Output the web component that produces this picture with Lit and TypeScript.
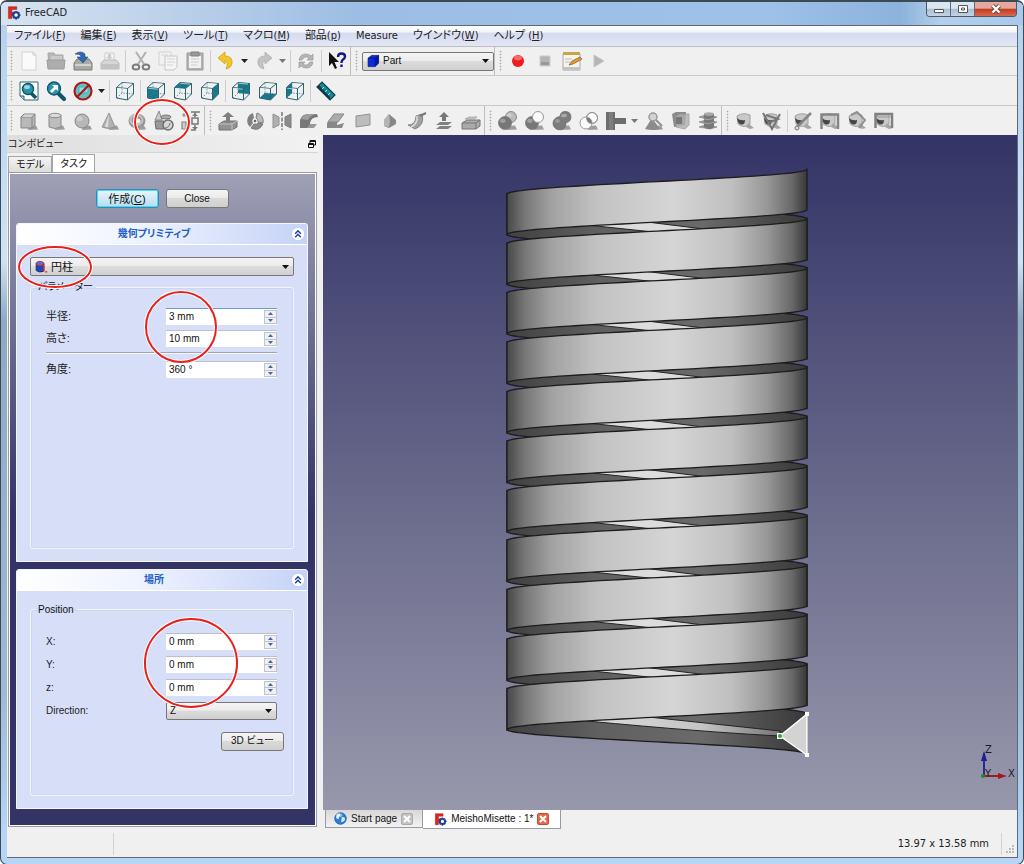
import { LitElement, html, svg, css, nothing, SVGTemplateResult, TemplateResult } from "lit";
import { customElement, property } from "lit/decorators.js";

/* ---------- icon drawings, all on a 20 x 20 grid ---------- */

const TEAL = "#16788c";

const viewCube = (face: string): SVGTemplateResult => svg`
  ${face ? svg`<path d=${face} fill=${TEAL} />` : nothing}
  <path d="M1.5 6.5 L12.5 7.5 V19 L1.5 17 Z M1.5 6.5 L7 1.5 L18.5 2.5 L12.5 7.5 M18.5 2.5 V13 L12.5 19" fill="none" stroke="#2b6470" />
  <path d="M7 2 V12 L18 13 M7 12 L2 17" fill="none" stroke="#44808c" stroke-width=".8" stroke-dasharray="1.5 1.3" />
  <path d="M2.2 7.3 L11.8 8.2 M7.4 2.3 L17 3.1" stroke="#fff" stroke-width=".6" />`;

const ball = (cx: number, cy: number, r: number, fill: string) => svg`
  <circle cx=${cx} cy=${cy} r=${r} fill=${fill} stroke="#777" stroke-width=".8" />
  <ellipse cx=${cx - r / 3} cy=${cy - r / 3} rx=${r / 2.4} ry=${r / 3} fill="#fff" opacity=".3" />`;

const shade = svg`<path d="M9 19 L19 18.5 L17 14.5 L10 15 Z" fill="#888" opacity=".8" />`;

const drum = svg`
  <path d="M2 5 Q8 1 15 4 V13 Q10 18 3 13 Z" fill="#c9c9c9" stroke="#a0a0a0" />
  <path d="M2 7 Q5 10 10 9 Q10 14 6 13.500 Q3 13 2 7 Z" fill="#454545" />
  <path d="M13 12 L19 17 L15 18 L11 16 Z" fill="#a6a6a6" />`;

const ICONS: Record<string, SVGTemplateResult> = {
  logo: svg`
    <path d="M2 1 H14 V5 H7 V9 H12 V12 H7 V18 H2 Z" fill="#e02420" stroke="#8f1512" stroke-width=".6" />
    <circle cx="13" cy="13" r="4" fill="#fff" stroke="#1c3f96" stroke-width="3" />
    <path d="M13 7 V9 M13 17 V19.5 M7 13 H9 M17 13 H19.5 M8.8 8.8 L10 10 M16 16 L17.4 17.4 M17.4 8.8 L16 10 M8.8 17.4 L10 16" stroke="#1c3f96" stroke-width="2" />`,
  file: svg`<path d="M3 1 H14 L17 4 V19 H3 Z" fill="#fafafa" stroke="#d2d2d2" /><path d="M14 1 V4 H17" fill="#e4e4e4" stroke="#ccc" />`,
  open: svg`<path d="M2 2 H8 L9 4 H17 V16 H3 Z" fill="#b8b8b8" stroke="#a5a5a5" /><path d="M5 6 H16 M5 8 H16" stroke="#ddd" /><path d="M1 9 H19 L18 18 H2 Z" fill="#adadad" stroke="#9c9c9c" />`,
  save: svg`<path d="M1 12 L4 8 H16 L19 12 V19 H1 Z" fill="#aaa9a6" stroke="#7b7b78" /><path d="M2 13 H18 V15 H2 Z" fill="#d2d2d0" /><path d="M2 3 Q8 -1 12 3 V6 H15 L10 12 L4 6 H8 Q8 3 2 3 Z" fill="#3269ad" stroke="#234f85" stroke-width=".6" />`,
  print: svg`<path d="M5 2 H14 V10 H5 Z" fill="#f4f4f4" stroke="#ccc" /><path d="M8 6 V3 H11 V6 H13 L9.500 9 L6 6 Z" fill="#ccc" /><path d="M1 12 L4 9 H16 L19 12 V18 H1 Z" fill="#d6d6d6" stroke="#bababa" /><path d="M1 13 H19 V18 H1 Z" fill="#c2c2c2" />`,
  cut: svg`<path d="M5 1 L13 13 M15 1 L7 13" stroke="#b0b0b0" stroke-width="2" /><ellipse cx="5" cy="16" rx="3.3" ry="2.6" fill="none" stroke="#7d7d7d" stroke-width="2" /><ellipse cx="15" cy="16" rx="3.3" ry="2.6" fill="none" stroke="#7d7d7d" stroke-width="2" />`,
  copy: svg`<path d="M1 1 H13 V14 H1 Z" fill="#f2f2f2" stroke="#d2d2d2" /><path d="M7 5 H19 V16 L16 19 H7 Z" fill="#f4f4f4" stroke="#c6c6c6" /><path d="M9 8 H17 M9 11 H17 M9 14 H15 M3 4 H10" stroke="#d4d4d4" />`,
  paste: svg`<path d="M2 2 H18 V19 H2 Z" fill="#b2b2b2" stroke="#9a9a9a" /><path d="M4 5 H16 V17 H4 Z" fill="#f1f1f1" /><path d="M6 1 H14 V5 H6 Z" fill="#999" stroke="#808080" /><path d="M6 8 H14 M6 11 H14 M6 14 H12" stroke="#ccc" />`,
  undo: svg`<path d="M2 7 L9 1 V5 Q17 5 16 13 Q15 17 10 18 Q13 10 9 10 V13 Z" fill="#f2c52b" stroke="#cda21d" stroke-width=".8" />`,
  redo: svg`<path d="M18 7 L11 1 V5 Q3 5 4 13 Q5 17 10 18 Q7 10 11 10 V13 Z" fill="#c2c2c2" stroke="#b0b0b0" stroke-width=".8" />`,
  refresh: svg`<path d="M3 9 Q4 3 10 3 Q13 3 15 5 L17 3 V9 H11 L13 7 Q9 4 6 9 Z M17 11 Q16 17 10 17 Q7 17 5 15 L3 17 V11 H9 L7 13 Q11 16 14 11 Z" fill="#b5b5b5" stroke="#999" stroke-width=".7" />`,
  whats: svg`<path d="M2 1 V15 L5 12 L8 18 L10 17 L7.500 11 H12 Z" fill="#111" /><path d="M11 6 Q11 2.500 14.500 2.500 Q18 2.500 18 5.500 Q18 7.500 15.500 9 Q14.500 10 14.500 12 M14.500 13.500 V16" fill="none" stroke="#17178c" stroke-width="2.4" />`,
  part: svg`<path d="M3 6 L8 2 H18 V13 L13 18 H3 Z" fill="#0a2be0" stroke="#061266" /><path d="M3 6 H13 L18 2 M13 6 V18" fill="none" stroke="#061266" /><path d="M13 6 L18 2 V13 L13 18 Z" fill="#0519a0" />`,
  rec: svg`<circle cx="10" cy="10" r="6" fill="#ee1c1c" /><ellipse cx="10" cy="7" rx="4" ry="2.400" fill="#fff" opacity=".35" />`,
  stop: svg`<path d="M5 5 H15 V15 H5 Z" fill="#b4b4b4" stroke="#ccc" /><path d="M6 11 H14 V14 H6 Z" fill="#999" />`,
  macro: svg`<path d="M1 3 H18 V19 H1 Z" fill="#f3f3f0" stroke="#aaa" /><path d="M1 1 H18 V4 H1 Z" fill="#c7a64a" /><path d="M1 16 H18 V19 H1 Z" fill="#c3c3c3" /><path d="M7 14 L10 10 L18 6 L20 8 L11 13 Z" fill="#e59a35" stroke="#8a5514" stroke-width=".7" /><path d="M3 8 H10 M3 11 H8" stroke="#bbb" />`,
  play: svg`<path d="M5 4 L15 10 L5 16 Z" fill="#b5b5b5" stroke="#c8c8c8" />`,
  fit: svg`<path d="M1 1 H19 V19 H5 L1 15 Z" fill="#fff" stroke="#2b6470" /><path d="M1 15 H5 V19" fill="#bcd" stroke="#2b6470" /><path d="M12 12 L17 17" stroke="#0f5666" stroke-width="3.500" /><circle cx="9" cy="8" r="5.500" fill="#2794ab" stroke="#0f5666" stroke-width="1.400" /><ellipse cx="8" cy="6" rx="3" ry="2" fill="#9ad6e2" />`,
  fitsel: svg`<path d="M12 12 L18 18" stroke="#0f5666" stroke-width="4" stroke-linecap="round" /><circle cx="8" cy="7.500" r="6.500" fill="#2794ab" stroke="#0f5666" stroke-width="1.400" /><path d="M6 4 H12 V10 L10 8 L6 12 L4 10 L8 6 Z" fill="#fff" />`,
  draw: svg`<circle cx="10" cy="10" r="8" fill="#5ec2cb" /><path d="M6 6 H12 V12 H6 Z M12 6 L15 4 V11 L12 13" fill="#98dde0" stroke="#4fa3ae" stroke-width=".8" /><circle cx="10" cy="10" r="8.500" fill="none" stroke="#b01515" stroke-width="2.200" /><path d="M4 16 L16 4" stroke="#b01515" stroke-width="2.200" />`,
  iso: viewCube(""),
  front: viewCube("M1.500 6.500 L12.500 7.500 V19 L1.500 17 Z"),
  top: viewCube("M1.500 6.500 L7 1.500 L18.500 2.500 L12.500 7.500 Z"),
  right: viewCube("M12.500 7.500 L18.500 2.500 V13 L12.500 19 Z"),
  rear: viewCube("M7 1.500 L18.500 2.500 V13 L7 12 Z"),
  bottom: viewCube("M1.500 17 L7 12 L18.500 13 L12.500 19 Z"),
  left: viewCube("M1.500 6.500 L7 1.500 V12 L1.500 17 Z"),
  measure: svg`<path d="M1 6 L6 1 L19 14 L14 19 Z" fill="#13899c" stroke="#123f48" stroke-width="1.200" /><path d="M1 6 L14 19 V16 L3 4 Z" fill="#173a42" /><path d="M8 6 L6 8 M11 9 L9 11 M14 12 L12 14" stroke="#bff" stroke-width=".8" />`,
  box: svg`${shade}<path d="M2 6 L5 3 H16 V14 L13 17 H2 Z" fill="#b8b8b8" stroke="#858585" /><path d="M2 6 H13 V17 M13 6 L16 3" fill="none" stroke="#858585" /><path d="M3 6 L5.500 3.500 H15 L12.500 6 Z" fill="#d4d4d4" />`,
  cylinder: svg`${shade}<path d="M3 4 V16 Q9 19 15 16 V4 Z" fill="#bdbdbd" stroke="#8a8a8a" /><ellipse cx="9" cy="4.500" rx="6" ry="2.200" fill="#dcdcdc" stroke="#8a8a8a" />`,
  sphere: svg`${shade}${ball(9, 10, 7, "#b8b8b8")}`,
  cone: svg`${shade}<path d="M9 2 L2 16 Q8 19 15 16 Z" fill="#b2b2b2" stroke="#888" stroke-width=".8" /><path d="M9 3 L5 16 H8 Z" fill="#ddd" />`,
  torus: svg`${shade}<ellipse cx="10" cy="10" rx="6" ry="5" fill="none" stroke="#979797" stroke-width="5" /><ellipse cx="9.500" cy="9" rx="6" ry="5" fill="none" stroke="#c4c4c4" stroke-width="2" />`,
  prims: svg`<path d="M5 0 L1 9 H8 Z" fill="#ccc" stroke="#8c8c8c" /><ellipse cx="12" cy="6" rx="5" ry="2" fill="#aaa" stroke="#777" /><path d="M1 10 H10 V18 H2 Z" fill="#9a9a9a" stroke="#6b6b6b" /><circle cx="14" cy="14" r="5" fill="#d6d6d6" stroke="#6f6f6f" stroke-width="1.500" /><path d="M11 17 Q15 17 16 12" fill="none" stroke="#777" />`,
  builder: svg`<path d="M3 2 V6 M1 4 H5 M1 11 H5 V18 H1 Z" fill="#ccc" stroke="#888" stroke-width="1.200" /><path d="M10 1 H19 M11 7 H17 V13 H11 Z M14 1 V6 M14 14 V19 H10" fill="none" stroke="#777" stroke-width="1.500" /><path d="M11 5 L14 2 L17 5 M11 16 L14 19 L17 16" fill="#777" />`,
  extrude: svg`<path d="M1 13 L6 10 H19 V16 L14 19 H1 Z" fill="#929292" stroke="#707070" /><path d="M1 13 H14 V19 M14 13 L19 10" fill="none" stroke="#c2c2c2" /><path d="M8 12 V6 H4 L10 1 L16 6 H12 V12 Z" fill="#808080" />`,
  revolve: svg`<path d="M8 2 A8.200 8.200 0 0 0 5 16 L8 12 A3.500 3.500 0 0 1 9 7 Z" fill="#808080" /><path d="M12 2 A8.200 8.200 0 0 1 18 12 L13 11 A3.500 3.500 0 0 0 11 7 Z" fill="#bcbcbc" stroke="#808080" /><path d="M6 17 Q14 21 18 13 L13 12 Q12 14 9 13 Z" fill="#8b8b8b" stroke="#777" /><circle cx="10" cy="10" r="1.300" fill="#666" />`,
  mirror: svg`<path d="M10 1 V19" stroke="#777" stroke-width="1.500" stroke-dasharray="4 1.500" /><path d="M1 3 L7 6 V14 L1 17 Z" fill="#b0b0b0" stroke="#909090" /><path d="M19 3 L13 6 V14 L19 17 Z" fill="#8c8c8c" stroke="#7a7a7a" />`,
  fillet: svg`<path d="M1 9 Q3 3 9 3 H18 L19 6 Q12 6 11 12 V17 H1 Z" fill="#777" /><path d="M2 8 Q4 4 9 3 H18 Q11 4 9 9 Z" fill="#9e9e9e" /><path d="M11 13 H18 L15 17 H8 Z" fill="#999" />`,
  chamfer: svg`<path d="M1 12 L8 3 H18 L11 12 V17 H1 Z" fill="#888" /><path d="M2 11 L8 3 H18 L12 11 Z" fill="#acacac" stroke="#888" /><path d="M11 14 L18 12 L16 17 H9 Z" fill="#888" />`,
  faceicon: svg`<path d="M3 5 L17 3 V14 L3 16 Z" fill="#bdbdbd" stroke="#949494" />`,
  ruled: svg`<path d="M4 15 V9 L9 3 L16 9 V13 L9 17 Z" fill="#878787" /><path d="M4 9 L9 3 L10 10 L9 16 L4 15 Z" fill="#b5b5b5" />`,
  loft: svg`<path d="M1 14 Q9 14 9 5 L15 3 Q18 14 8 18 Z" fill="#a0a0a0" stroke="#858585" /><path d="M10 5 Q11 13 4 16" stroke="#ddd" fill="none" stroke-width="1.500" /><path d="M13 5 L19 2" stroke="#777" stroke-width="2" />`,
  sweep: svg`<path d="M2 14 L6 11 H18 L14 14 Z M2 18 L6 15 H18 L14 18 Z" fill="#808080" /><path d="M8 10 V6 H5 L10 1 L15 6 H12 V10 Z" fill="#777" />`,
  offset: svg`<path d="M1 12 L6 9 H19 V15 L15 18 H1 Z" fill="#aaa" stroke="#777" /><path d="M1 12 H15 V18 M15 12 L19 9" fill="none" stroke="#777" /><path d="M4 8 L8 6 H16 L13 8 Z" fill="#ccc" stroke="#999" stroke-width=".7" />`,
  bool: svg`${shade}${ball(13, 6, 5.5, "#bcbcbc")}${ball(7, 12, 6.5, "#777")}`,
  cutbool: svg`${shade}${ball(7, 12, 6.5, "#777")}<circle cx="13" cy="6" r="5.500" fill="#fbfbfb" stroke="#999" />`,
  union: svg`${shade}<path d="M8 5 A5.500 5.500 0 1 1 14 11.500 A6.500 6.500 0 1 1 6 6 Q7.500 6 8 5 Z" fill="#7c7c7c" stroke="#6c6c6c" stroke-width=".8" /><ellipse cx="12" cy="4.500" rx="3" ry="1.800" fill="#aaa" /><ellipse cx="5.500" cy="10" rx="2.500" ry="2" fill="#999" />`,
  common: svg`${shade}<circle cx="13" cy="7" r="5.500" fill="#fbfbfb" stroke="#999" /><circle cx="7" cy="12" r="6" fill="#fbfbfb" stroke="#999" /><path d="M7.500 7 Q12 6 13 12.500 Q8 13 7.500 7 Z" fill="#777" /><circle cx="13" cy="7" r="5.500" fill="none" stroke="#999" />`,
  connect: svg`<path d="M0 1 H9 V7 H20 V13 H9 V19 H0 Z" fill="#6d6d6d" /><path d="M3 1 H7 V19 H3 Z" fill="#7e7e7e" />`,
  check: svg`${shade}<path d="M8 7 L1 18 Q8 20 16 18 Z" fill="#8b8b8b" /><circle cx="9" cy="6" r="4" fill="#d2d2d2" stroke="#999" stroke-width="1.500" /><path d="M12 9 L18 15" stroke="#909090" stroke-width="2" />`,
  section: svg`<path d="M1 3 L5 1 H15 L14 14 L3 16 Z" fill="#8a8a8a" /><path d="M5 5 L9 3 H18 V14 L14 18 L5 16 Z" fill="#b0b0b0" opacity=".8" stroke="#999" /><path d="M5 6 H11 V13 H5 Z" fill="#777" />`,
  cross: svg`<path d="M1 6 L8 4 L19 6 L12 9 Z M1 11 L8 9 L19 11 L12 14 Z M1 16 L8 14 L19 16 L12 18 Z" fill="#999" stroke="#858585" stroke-width=".7" /><path d="M6 3 Q10 1 16 3 V16 Q11 20 6 16 Z" fill="#787878" /><path d="M6 8 Q11 10 16 7 M6 12 Q11 14 16 11" fill="none" stroke="#a5a5a5" /><ellipse cx="11" cy="3" rx="5" ry="1.800" fill="#a9a9a9" />`,
  mlinear: drum,
  mangular: svg`${drum}<path d="M1 2 L10 18 L18 3 M4 4 L16 8 L6 12" fill="none" stroke="#777" stroke-width="2" />`,
  mclear: svg`${drum}<path d="M3 17 L18 2" stroke="#858585" stroke-width="2.500" /><circle cx="4" cy="17" r="2" fill="#ddd" stroke="#777" />`,
  mtoggle: svg`${drum}<path d="M1.500 18 V3.500 H18 V18" fill="none" stroke="#858585" stroke-width="2.500" />`,
  m3d: svg`${drum}<path d="M4 4 L10 1 L18 9 L12 17" fill="none" stroke="#909090" stroke-width="2" />`,
  mdelta: svg`${drum}<path d="M1.500 17 V3 H18 V17" fill="none" stroke="#808080" stroke-width="2.500" /><path d="M2 6 H17" stroke="#999" />`,
  cyl: svg`<path d="M3 5 V15 Q8 19 14 16 V5 Z" fill="#1d48b5" stroke="#10245f" /><ellipse cx="8.500" cy="5" rx="5.500" ry="3" fill="#4676dc" stroke="#d22" stroke-width="1.300" /><path d="M14 5 V16 M16 17 H19" stroke="#d22" stroke-width="2" />`,
  globe: svg`<circle cx="10" cy="10" r="9" fill="#2c7fd6" stroke="#1a5299" /><path d="M5 4 Q9 1 10 5 Q6 8 8 10 Q4 12 3 8 Z M12 8 Q17 7 17 11 Q15 17 11 15 Z" fill="#d8eefc" /><ellipse cx="8" cy="5" rx="5" ry="3" fill="#fff" opacity=".45" />`,
  up: svg`<circle cx="10" cy="10" r="9.500" fill="#fff" stroke="#b5c3e8" /><path d="M6 9.500 L10 5.500 L14 9.500 M6 14.500 L10 10.500 L14 14.500" fill="none" stroke="#1b3f9e" stroke-width="2" />`,
  float: svg`<path d="M6 3 H17 V12 H6 Z M6 5 H17" fill="#eee" stroke="#111" stroke-width="2" /><path d="M3 9 H13 V17 H3 Z M3 11 H13" fill="#eee" stroke="#111" stroke-width="2" />`,
};

@customElement("fc-icon")
class FcIcon extends LitElement {
  static styles = css`
    :host { display: inline-flex; flex: none; width: 20px; height: 20px; }
    .art { display: block; width: 100%; height: 100%; }
  `;
  @property() name = "";
  render() {
    return html`<svg class="art" viewBox="0 0 20 20" aria-hidden="true">${ICONS[this.name] ?? nothing}</svg>`;
  }
}

@customElement("fc-spin")
class FcSpin extends LitElement {
  static styles = css`
    :host { display: flex; min-width: 0; height: 17px; background: #fff; border-top: 1px solid #b9c0d2; box-sizing: border-box; }
    :host([active]) { border-top-color: #6b9bd2; }
    .field { flex: 1; min-width: 0; border: 0; padding: 0 0 0 3px; background: none; color: #111; outline: 0;
      font: 10px/16px "Liberation Sans", "Noto Sans CJK JP", sans-serif; }
    .steps { display: flex; flex: none; flex-direction: column; width: 13px; padding: 1px 0; }
    .step { flex: 1; min-height: 0; display: grid; place-items: center; padding: 0; border: 1px solid #c3c3c9; background: #f0f0f2; }
    .step + .step { border-top: 0; }
    .tri { width: 5px; height: 3px; display: block; }
  `;
  @property() value = "";
  @property() label = "";
  render() {
    return html`
      <input class="field" aria-label=${this.label} .value=${this.value} />
      <span class="steps">
        <button class="step" aria-label="+"><svg class="tri" viewBox="0 0 5 3"><path d="M0 3 L2.500 0 L5 3 Z" fill="#4a62a8" /></svg></button>
        <button class="step" aria-label="-"><svg class="tri" viewBox="0 0 5 3"><path d="M0 0 L2.500 3 L5 0 Z" fill="#4a62a8" /></svg></button>
      </span>`;
  }
}

/* ---------- 3D model: a ribbon wound around a cylinder ---------- */

const CX = 334, R = 150, PITCH = 49.5, TURNS = 11, BAND = 40.5, TOP = 59;

/** Points of half a turn, from the left edge to the right one, rising or falling by `dy`. */
const halfTurn = (y: number, dy: number): string[] => {
  const pts: string[] = [];
  for (let i = 0; i <= 40; i++) {
    const t = (Math.PI * i) / 40;
    pts.push(`${(CX - R * Math.cos(t)).toFixed(1)} ${(y + (dy * i) / 40).toFixed(1)}`);
  }
  return pts;
};

const ribbon = (y: number, dy: number) =>
  "M" + halfTurn(y, dy).join(" L") + " L" + halfTurn(y + BAND, dy).reverse().join(" L") + " Z";

const helix = () => {
  const rows = Array.from({ length: TURNS }, (_, k) => TOP + k * PITCH);
  return svg`
    ${rows.map((y, k) => svg`
      <path d=${ribbon(y, PITCH / 2)} fill="url(#inner)" stroke="#1c1c1c" stroke-width="1.300" />
      ${k < TURNS - 1
        ? svg`<path d="M264 ${y + 31} L316 ${y + 27} L385 ${y + 35.5} L340 ${y + 39} Z" fill="#dcdcdc" stroke="#222" />`
        : svg`<path d="M264 ${y + 32} L316 ${y + 27} Q420 ${y + 38} 457 ${y + 42} V${y + 47} Q380 ${y + 43} 264 ${y + 32} Z" fill="url(#slit)" stroke="#222" />`}`)}
    ${rows.map((y) => svg`<path d=${ribbon(y, -PITCH / 2)} fill="url(#outer)" stroke="#1c1c1c" stroke-width="1.300" />`)}`;
};

interface Tool { icon: string; drop?: boolean; sep?: boolean; }
const tools = (spec: string): Tool[] =>
  spec.split(" ").map((s) => ({ icon: s.replace(/[|+]/g, ""), sep: s.startsWith("|"), drop: s.endsWith("+") }));

const MENU: [string, string, string][] = [
  ["ファイル(", "F", ")"], ["編集(", "E", ")"], ["表示(", "V", ")"], ["ツール(", "T", ")"], ["マクロ(", "M", ")"],
  ["部品(", "p", ")"], ["Measure", "", ""], ["ウインドウ(", "W", ")"], ["ヘルプ (", "H", ")"],
];

@customElement("app-root")
class AppRoot extends LitElement {
  static styles = css`
    :host { display: block; }
    * { box-sizing: border-box; }
    .window { position: relative; display: flex; flex-direction: column; min-height: 100vh; overflow: hidden;
      padding: 1px 5px 6px 6px; border: 1px solid #3c4a56; border-top-width: 2px; border-radius: 7px;
      background: linear-gradient(180deg, #b5d0ee 0%, #cfe2f5 30%, #8fa9c4 37%, #9db9d6 80%, #b7d6f5 97%);
      font: 11px/16px "DejaVu Sans Condensed", "DejaVu Sans", "Noto Sans CJK JP", sans-serif;
      font-feature-settings: "palt"; color: #222; }
    .title { display: flex; align-items: flex-start; height: 23px; margin: -1px -5px 0 -6px; padding: 0 6px;
      background: linear-gradient(90deg, #d8e3f0 0%, #c3d6ec 12%, #9dbde4 35%, #9fc1e8 75%, #8db2dc 88%, #b4cfec 92%, #a9c8ea 100%); }
    .brand { display: flex; flex: 1; align-items: center; gap: 4px; height: 22px; }
    .brand fc-icon { width: 14px; height: 14px; }
    .caption { display: flex; height: 15px; border: 1px solid #4b5a6c; border-top: 0; border-radius: 0 0 4px 4px; overflow: hidden; }
    .cap { display: grid; place-items: center; width: 24px; padding: 0; border: 0; border-right: 1px solid #5c6b7e;
      background: linear-gradient(#dbe5f0 45%, #a9bcd2 50%, #c3d4e6); }
    .cap.shut { width: 41px; border: 0; background: linear-gradient(#e3a99c 45%, #c23a24 50%, #d96a4c); }
    .glyph { display: block; width: 12px; height: 10px; }

    .client { display: flex; flex: 1; flex-direction: column; border: 1px solid #5d6b78; border-left: 0; background: #f0f0f0; }
    .menu { display: flex; align-items: center; gap: 15px; height: 21px; padding: 0 7px;
      border-bottom: 1px solid #bfbfbf; background: linear-gradient(#fff 0, #f2f4fb 30%, #d5dcef 36%, #e2e7f7 100%); }
    .menu a { color: #222; text-decoration: none; white-space: nowrap; }
    .toolrow { display: flex; height: 29px; border-bottom: 1px solid #c9c9c9; }
    .toolrow.views { height: 30px; }
    .toolrow.last { border-bottom: 0; }
    .bar { display: flex; align-items: center; }
    .bar + .bar { border-left: 1px solid #bdbdbd; padding-left: 1px; }
    .grip { width: 8px; height: 22px; background: radial-gradient(circle, #aaa 40%, transparent 50%) 3px 0 / 3px 3px repeat-y; }
    .tool { display: grid; place-items: center; width: 27px; height: 26px; padding: 0; border: 0; background: none; }
    .drop { display: grid; place-items: center; width: 11px; height: 26px; padding: 0; border: 0; background: none; }
    .sep { width: 1px; height: 22px; margin: 0 1px 0 2px; background: #cdcdcd; }
    .arrow { display: block; flex: none; width: 7px; height: 4px; pointer-events: none; }

    .combo { display: flex; align-items: center; height: 19px; padding: 0 4px 0 3px; border: 1px solid #777; border-radius: 2px;
      background: linear-gradient(#f4f4f4, #ececec 45%, #dcdcdc 50%, #d0d0d0); }
    .combo fc-icon { width: 14px; height: 14px; }
    .combo select { flex: 1; min-width: 0; appearance: none; border: 0; padding: 0 0 0 3px; background: none; color: #111; outline: 0;
      font: 10px/16px "Liberation Sans", "Noto Sans CJK JP", sans-serif; }
    .combo.workbench { width: 132px; margin-left: 2px; }
    .combo select.kanji { font-size: 11px; }

    .main { display: flex; flex: 1; gap: 5px; font-size: 10px; font-family: "Liberation Sans", "Noto Sans CJK JP", sans-serif; }
    .dock { display: flex; flex-direction: column; width: 311px; flex: none; }
    .docktitle { display: flex; align-items: center; justify-content: space-between; height: 18px; padding: 0 1px;
      background: linear-gradient(90deg, #dedede, #f2f2f2); border-bottom: 1px solid #d5d5d5; }
    .docktitle button { display: grid; padding: 0; border: 0; background: none; }
    .docktitle fc-icon { width: 10px; height: 10px; }
    .tabs { display: flex; align-items: flex-end; height: 19px; padding: 1px 1px 0; }
    .tab { height: 16px; padding: 0 7px; border: 1px solid #a5a5a5; border-bottom: 0; background: linear-gradient(#f4f4f4, #dcdcdc);
      color: #111; font: inherit; line-height: 15px; font-feature-settings: inherit; }
    .tab.on { height: 18px; background: #fff; }
    .tasks { display: flex; flex: 1; flex-direction: column; gap: 7px; margin: 0 1px 3px; padding: 16px 8px 17px 7px;
      border: 1px solid #9a9aa4; outline: 1px solid #fff; outline-offset: -2px;
      background: linear-gradient(#a0a0b6 0, #333366 340px); }
    .actions { display: flex; justify-content: center; gap: 7px; margin-bottom: 8px; }
    .push { height: 19px; min-width: 63px; padding: 0 6px; border: 1px solid #777; border-radius: 3px; color: #111;
      background: linear-gradient(#f5f5f5, #ebebeb 45%, #dadada 50%, #cfcfcf); font: inherit; line-height: 16px; font-feature-settings: inherit; }
    .push.main-action { font-size: 11px; border-color: #2b8db5; box-shadow: inset 0 0 0 1px #54d4f7; background: linear-gradient(#e6f6fc, #cfeaf6 50%, #b3dcee); }
    .box { display: flex; flex-direction: column; background: #d6dff7; border: 1px solid #f4f6fd; border-radius: 3px 3px 0 0; }
    .box.first { flex: 339 0 0; }
    .box.second { flex: 240 0 0; }
    .boxhead { display: flex; align-items: center; height: 21px; padding-right: 2px; border-bottom: 1px solid #fff; border-radius: 3px 3px 0 0;
      background: linear-gradient(90deg, #fff, #f0f4ff 40%, #c6d3f7); }
    .boxhead h2 { flex: 1; margin: 0; text-align: center; font-size: 10px; line-height: 16px; font-weight: 700; color: #215dc6; }
    .boxhead button { display: grid; padding: 0; border: 0; background: none; }
    .boxhead fc-icon { width: 14px; height: 14px; }
    .boxbody { display: flex; flex: 1; flex-direction: column; gap: 4px; padding: 12px 13px 12px; }
    .group { flex: 1; min-width: 0; margin: 0; padding: 14px 16px 0 15px; border: 1px solid #f2f5fe; border-radius: 3px; box-shadow: inset 0 0 0 1px #ccd6ef; }
    .group legend { padding: 0 3px; margin-left: -11px; line-height: 14px; color: #111; }
    .grid { display: grid; grid-template-columns: 120px minmax(0, 1fr); row-gap: 5px; align-items: center; }
    .grid.low { row-gap: 6px; padding-top: 2px; }
    .grid label { line-height: 17px; color: #222; }
    .grid.kanji label { font-size: 11px; }
    .rule { grid-column: 1 / -1; width: 100%; height: 2px; margin: 0 0 2px; border: 0; border-top: 1px solid #a2a5ae; border-bottom: 1px solid #f5f7ff; }
    .grid .combo { height: 18px; padding-left: 0; }
    .right { display: flex; justify-content: flex-end; margin: 12px -7px 0 0; }

    .work { display: flex; flex: 1; flex-direction: column; min-width: 0; }
    .view { flex: 1; min-height: 0; background: linear-gradient(#333366, #9898ac); display: flex; }
    .scene { display: block; width: 100%; height: 100%; }
    .axis { font: 10px "DejaVu Sans", sans-serif; fill: #1a1a22; }
    .docs { display: flex; align-items: flex-start; height: 20px; padding-left: 2px; }
    .doc { display: flex; align-items: center; gap: 4px; height: 18px; padding: 0 9px 0 8px; border: 1px solid #9a9aa2; border-top: 0; color: #111;
      background: linear-gradient(#d8d8d8, #f2f2f2); }
    .doc.on { height: 19px; padding: 0 11px; background: #fff; border-left: 0; }
    .doc fc-icon { width: 13px; height: 13px; }
    .doc a { color: #111; text-decoration: none; white-space: nowrap; }
    .close { display: grid; place-items: center; width: 12px; height: 12px; padding: 0; border: 1px solid #aaa; border-radius: 2px; background: #c3c3c3; }
    .close.hot { border-color: #cc4a30; background: #e2694d; }
    .x { display: block; width: 8px; height: 8px; }

    .status { display: flex; align-items: center; height: 27px; }
    .status .left { width: 107px; height: 22px; border-right: 1px solid #d2d2d2; }
    .status output { margin-left: auto; padding-right: 12px; height: 22px; line-height: 22px; border-right: 1px solid #d2d2d2; }
    .size { width: 10px; height: 10px; margin: 14px 2px 0 3px; align-self: flex-start; }
    .marks { position: absolute; left: -1px; top: -2px; width: 320px; height: 720px; pointer-events: none; fill: none; }
  `;

  private arrow(color = "#111") {
    return html`<svg class="arrow" viewBox="0 0 7 4"><path d="M0 0 H7 L3.500 4 Z" fill=${color} /></svg>`;
  }

  private bar(list: Tool[], extra: TemplateResult | typeof nothing = nothing) {
    return html`<div class="bar" role="toolbar"><span class="grip"></span>${extra}${list.map(
      (t) => html`${t.sep ? html`<span class="sep"></span>` : nothing}
        <button class="tool" aria-label=${t.icon}><fc-icon name=${t.icon}></fc-icon></button>
        ${t.drop ? html`<button class="drop" aria-label=${t.icon + " menu"}>${this.arrow(t.icon === "undo" || t.icon === "draw" ? "#222" : "#777")}</button>` : nothing}`
    )}</div>`;
  }

  private closeGlyph() {
    return html`<svg class="x" viewBox="0 0 8 8"><path d="M1 1 L7 7 M7 1 L1 7" stroke="#fff" stroke-width="2" /></svg>`;
  }

  private row(label: string, value: string, active = false) {
    return html`<label>${label}</label><fc-spin .label=${label} .value=${value} ?active=${active}></fc-spin>`;
  }

  render() {
    return html`
      <div class="window">
        <header class="title">
          <span class="brand"><fc-icon name="logo"></fc-icon>FreeCAD</span>
          <span class="caption">
            <button class="cap" aria-label="Minimize"><svg class="glyph" viewBox="0 0 12 10"><path d="M1.500 5.500 H10.500 V8.500 H1.500 Z" fill="#fff" stroke="#555" /></svg></button>
            <button class="cap" aria-label="Maximize"><svg class="glyph" viewBox="0 0 12 10"><path d="M1.500 1.500 H10.500 V8.500 H1.500 Z M4.500 4 H7.500 V6 H4.500 Z" fill="#fff" stroke="#555" /></svg></button>
            <button class="cap shut" aria-label="Close window"><svg class="glyph" viewBox="0 0 12 10"><path d="M2.500 1.500 L9.500 8.500 M9.500 1.500 L2.500 8.500" stroke="#6a3b38" stroke-width="4" /><path d="M2.500 1.500 L9.500 8.500 M9.500 1.500 L2.500 8.500" stroke="#fff" stroke-width="2.400" /></svg></button>
          </span>
        </header>
        <div class="client">
          <nav class="menu">${MENU.map(([a, k, b]) => html`<a href="#">${a}<u>${k}</u>${b}</a>`)}</nav>
          <div class="toolrow">
            ${this.bar(tools("file open save print |cut copy paste |undo+ redo+ |refresh |whats"))}
            ${this.bar([], html`<span class="combo workbench"><fc-icon name="part"></fc-icon>
              <select aria-label="Workbench"><option>Part</option><option>Part Design</option></select>${this.arrow()}</span>`)}
            ${this.bar(tools("rec stop macro play"))}
          </div>
          <div class="toolrow views">
            ${this.bar(tools("fit fitsel draw+ |iso |front top right |rear bottom left |measure"))}
          </div>
          <div class="toolrow last">
            ${this.bar(tools("box cylinder sphere cone torus prims builder"))}
            ${this.bar(tools("extrude revolve mirror fillet chamfer faceicon ruled loft sweep offset"))}
            ${this.bar(tools("bool cutbool union common connect+ check section cross"))}
            ${this.bar(tools("mlinear mangular |mclear mtoggle m3d mdelta"))}
          </div>
          <div class="main">
            <aside class="dock">
              <div class="docktitle">コンボビュー<button aria-label="Float"><fc-icon name="float"></fc-icon></button></div>
              <div class="tabs"><button class="tab">モデル</button><button class="tab on">タスク</button></div>
              <div class="tasks">
                <div class="actions">
                  <button class="push main-action">作成(<u>C</u>)</button>
                  <button class="push">Close</button>
                </div>
                <section class="box first">
                  <div class="boxhead"><h2>幾何プリミティブ</h2><button aria-label="Collapse"><fc-icon name="up"></fc-icon></button></div>
                  <div class="boxbody">
                    <span class="combo"><fc-icon name="cyl"></fc-icon>
                      <select class="kanji" aria-label="Primitive"><option>円柱</option><option>円錐</option></select>${this.arrow()}</span>
                    <fieldset class="group">
                      <legend>パラメーター</legend>
                      <div class="grid kanji">
                        ${this.row("半径:", "3 mm", true)}
                        ${this.row("高さ:", "10 mm")}
                        <hr class="rule" />
                        ${this.row("角度:", "360 °")}
                      </div>
                    </fieldset>
                  </div>
                </section>
                <section class="box second">
                  <div class="boxhead"><h2>場所</h2><button aria-label="Collapse"><fc-icon name="up"></fc-icon></button></div>
                  <div class="boxbody">
                    <fieldset class="group">
                      <legend>Position</legend>
                      <div class="grid low">
                        ${this.row("X:", "0 mm")}
                        ${this.row("Y:", "0 mm")}
                        ${this.row("z:", "0 mm")}
                        <label for="dir">Direction:</label>
                        <span class="combo"><select id="dir"><option>Z</option><option>X</option><option>Y</option></select>${this.arrow()}</span>
                      </div>
                      <div class="right"><button class="push">3D ビュー</button></div>
                    </fieldset>
                  </div>
                </section>
              </div>
            </aside>
            <main class="work">
              <div class="view">
                <svg class="scene" viewBox="0 0 694 675" role="img" aria-label="3D view">
                  <defs>
                    <linearGradient id="outer" gradientUnits="userSpaceOnUse" x1="184" x2="484" y1="0" y2="0">
                      <stop offset="0" stop-color="#484848" /><stop offset=".06" stop-color="#777" /><stop offset=".15" stop-color="#a2a2a2" />
                      <stop offset=".3" stop-color="#c2c2c2" /><stop offset=".55" stop-color="#d5d5d5" /><stop offset=".75" stop-color="#bfbfbf" />
                      <stop offset=".87" stop-color="#969696" /><stop offset=".95" stop-color="#686868" /><stop offset="1" stop-color="#383838" />
                    </linearGradient>
                    <linearGradient id="inner" gradientUnits="userSpaceOnUse" x1="184" x2="484" y1="0" y2="0">
                      <stop offset="0" stop-color="#404040" /><stop offset=".3" stop-color="#606060" /><stop offset=".65" stop-color="#6a6a6a" /><stop offset="1" stop-color="#383838" />
                    </linearGradient>
                    <linearGradient id="slit"><stop offset="0" stop-color="#ddd" /><stop offset=".6" stop-color="#c4c4c4" /><stop offset="1" stop-color="#777" /></linearGradient>
                  </defs>
                  ${helix()}
                  <path d="M484 579 V620 L457 601 Z" fill="#d3d3d3" stroke="#fff" stroke-width="1.500" />
                  <path d="M482 577 h4 v4 h-4 Z M482 618 h4 v4 h-4 Z M454 598 h5 v6 h-5 Z" fill="#fff" />
                  <circle cx="457" cy="601" r="2" fill="#23b02c" />
                  <path d="M661 640 V618" stroke="#2a2a9c" stroke-width="2" /><path d="M661 616 L658 626 H664 Z" fill="#20208f" />
                  <path d="M661 641 H678" stroke="#a01c1c" stroke-width="2" /><path d="M684 641 L675 638 V644 Z" fill="#a01c1c" />
                  <circle cx="660" cy="641" r="2" fill="#1f8a2c" />
                  <text class="axis" x="662" y="618">Z</text><text class="axis" x="662" y="642">Y</text><text class="axis" x="685" y="642">X</text>
                </svg>
              </div>
              <div class="docs">
                <span class="doc"><fc-icon name="globe"></fc-icon><a href="#">Start page</a><button class="close" aria-label="Close tab">${this.closeGlyph()}</button></span>
                <span class="doc on"><fc-icon name="logo"></fc-icon><a href="#">MeishoMisette : 1*</a><button class="close hot" aria-label="Close tab">${this.closeGlyph()}</button></span>
              </div>
            </main>
          </div>
          <footer class="status">
            <span class="left"></span>
            <output>13.97 x 13.58 mm</output>
            <svg class="size" viewBox="0 0 10 10"><path d="M7 1 h2 v2 h-2 Z M7 4 h2 v2 h-2 Z M4 4 h2 v2 h-2 Z M7 7 h2 v2 h-2 Z M4 7 h2 v2 h-2 Z M1 7 h2 v2 h-2 Z" fill="#bbb" /></svg>
          </footer>
        </div>
        <svg class="marks" viewBox="0 0 320 720" aria-hidden="true">
          ${[[162, 122, 27, 22], [55, 267, 36, 20], [181, 327, 35, 35], [191, 663, 46, 44]].map(
            ([x, y, a, b]) => svg`<ellipse cx=${x} cy=${y} rx=${a} ry=${b} stroke="#fff" stroke-width="4" />
              <ellipse cx=${x} cy=${y} rx=${a} ry=${b} stroke="#e8201c" stroke-width="2" />`)}
        </svg>
      </div>`;
  }
}
